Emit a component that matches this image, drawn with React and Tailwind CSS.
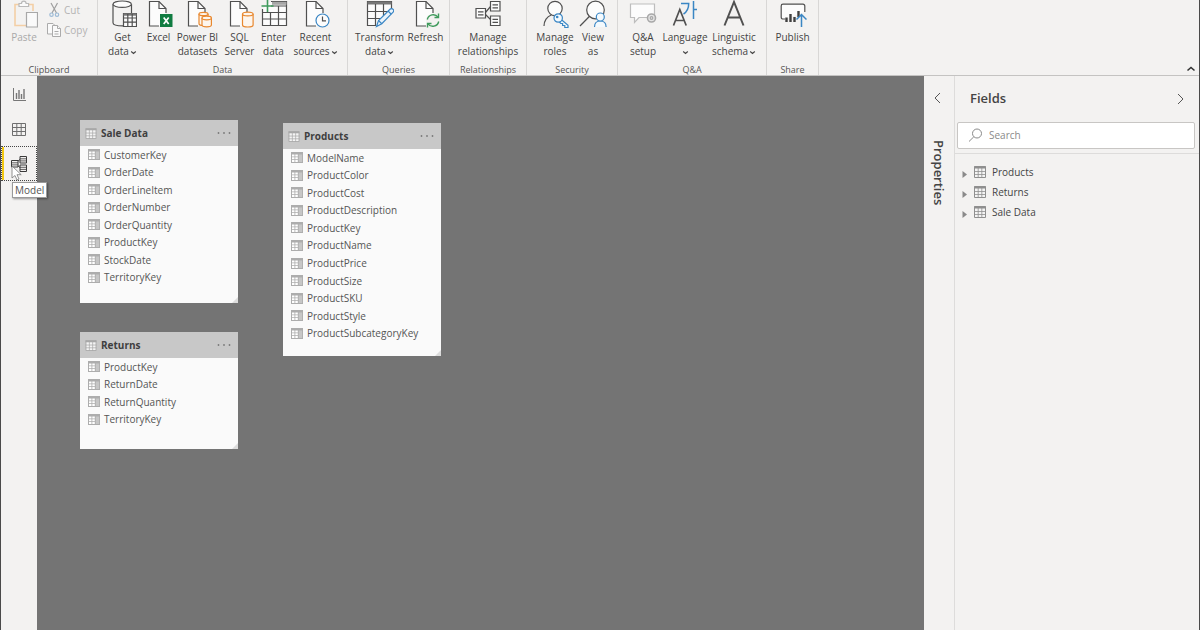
import { useState } from "react";

/* ---------- icons ---------- */

function RibbonIcon({ children }) {
  return (
    <svg
      className="h-7 w-7 shrink-0"
      viewBox="0 0 28 28"
      fill="none"
      stroke="#505050"
      strokeWidth="1.2"
      aria-hidden="true"
    >
      {children}
    </svg>
  );
}

// Sheet of paper with a folded corner, shared by several commands.
function Page() {
  return (
    <>
      <path d="M4.5 26V1.5H14l7 7V26z" fill="#fcfcfc" stroke="none" />
      <path d="M14 26H4.5V1.5H14l7 7V13" />
      <path d="M14 1.5v7h7" />
    </>
  );
}

const PasteIcon = () => (
  <RibbonIcon>
    <path d="M9 4.5H5v21h11M19 4.500h4V11" stroke="#f3cfa6" strokeWidth="1.600" />
    <path d="M9 6.500v-3h2.500a2.300 2.300 0 014.600 0h2.500v3z" fill="#fafafa" stroke="#b9b9b9" />
    <path d="M16.500 12.500H27.500V27H16.500z" fill="#fafafa" stroke="#a8a8a8" />
  </RibbonIcon>
);

const GetDataIcon = () => (
  <RibbonIcon>
    <path d="M4 4.200v18.500c0 1.800 4 3.200 10 3.200M22.500 4.200V13" />
    <ellipse cx="13.200" cy="4.200" rx="9.200" ry="3.200" fill="#fcfcfc" />
    <path d="M14.500 13.500h13v13h-13z" fill="#fcfcfc" />
    <path d="M14.500 14.500h13" stroke="#777777" strokeWidth="2.400" />
    <path d="M14.500 18h13M14.500 22.200h13M18.800 14v12.500M23.200 14v12.500" />
  </RibbonIcon>
);

const ExcelIcon = () => (
  <RibbonIcon>
    <Page />
    <path d="M15 14h12.500v13H15z" fill="#107c41" stroke="none" />
    <path d="M18.700 17.500l5 6.500M23.700 17.500l-5 6.500" stroke="#ffffff" strokeWidth="1.700" />
  </RibbonIcon>
);

const DatasetsIcon = () => (
  <RibbonIcon>
    <Page />
    <g stroke="#e8882f" fill="#fdf6ee">
      <path d="M15 14v9.500c0 1.600 2 2 4 2h5V14" />
      <ellipse cx="19.500" cy="14" rx="4.500" ry="1.700" />
      <path d="M18 18v7c0 1 2 1.800 4.700 1.800s4.700-.8 4.700-1.800v-7" />
      <ellipse cx="22.700" cy="18" rx="4.700" ry="1.800" />
    </g>
  </RibbonIcon>
);

const SqlIcon = () => (
  <RibbonIcon>
    <Page />
    <g stroke="#e8882f" fill="#fdf6ee">
      <path d="M16.500 14v11c0 1.200 2.200 2 5.300 2s5.300-.8 5.300-2V14" />
      <ellipse cx="21.800" cy="14" rx="5.300" ry="1.900" />
    </g>
  </RibbonIcon>
);

const EnterDataIcon = () => (
  <RibbonIcon>
    <path d="M2.500 9v16.500h24v-24H11" fill="#fcfcfc" />
    <path d="M12 3.300h14.500" stroke="#a6a6a6" strokeWidth="3" />
    <path d="M11 6h15.500M2.500 12.500h24M2.500 19h24M10.500 12v13.500M18.500 6v19.500" />
    <path d="M7.500 0v12M1.500 6h12" stroke="#3f9a5c" strokeWidth="1.600" />
  </RibbonIcon>
);

const RecentIcon = () => (
  <RibbonIcon>
    <Page />
    <circle cx="20.500" cy="20.500" r="6.500" fill="#fcfcfc" stroke="#3a86c4" />
    <path d="M20.500 16.500v4.300H24" />
  </RibbonIcon>
);

const TransformIcon = () => (
  <RibbonIcon>
    <path d="M1.500 1.500h24v8L14 25.500H1.500z" fill="#fcfcfc" stroke="none" />
    <path d="M10 25.500H1.500v-24h24V9" />
    <path d="M1.500 3h24" stroke="#777777" strokeWidth="3" />
    <path d="M1.500 11.500h21M1.500 18.500h14M9.500 4v21M17.500 4v12" />
    <path d="M10.500 26.500l2-6L24 9.200c1-1 2.300-.8 3.100.1s.9 2 0 2.900L15.800 23.700z" fill="#eaf4fc" stroke="#3a86c4" />
    <path d="M12.500 20.500l3.300 3.200M22 11l3.300 3.200" stroke="#3a86c4" />
  </RibbonIcon>
);

const RefreshIcon = () => (
  <RibbonIcon>
    <Page />
    <circle cx="21" cy="20.500" r="7" fill="#f3f2f1" stroke="none" />
    <g stroke="#3f9a5c" strokeWidth="1.400">
      <path d="M15.300 19.500a6 6 0 0110.700-2.300M26.700 21.500a6 6 0 01-10.700 2.300" />
      <path d="M26.500 13.500v4h-4M15.500 27.500v-4h4" />
    </g>
  </RibbonIcon>
);

const RelationshipsIcon = () => (
  <RibbonIcon>
    <path d="M11 13l6-7M11 14l6 6" />
    <path d="M2 8.500h9.500v9.500H2zM16.500 1.500H26V11h-9.500zM16.500 16H26v9.500h-9.500z" fill="#fcfcfc" />
    <path d="M4 11.800h5.500M4 14.800h5.500M18.500 4.800H24M18.500 7.800H24M18.500 19.300H24M18.500 22.300H24" />
  </RibbonIcon>
);

const RolesIcon = () => (
  <RibbonIcon>
    <circle cx="14" cy="8.500" r="7.200" fill="#fcfcfc" />
    <path d="M3 26c0-5 3-9.500 7.300-11" />
    <g stroke="#3a86c4" fill="#f3f9fd">
      <path d="M20.500 19.800l6.500 5.500v2.200h-3.200v-2h-2.200v-2h-1.800l-1.500-1.500" />
      <circle cx="17.200" cy="18" r="4.200" />
      <circle cx="16.200" cy="17" r=".7" />
    </g>
  </RibbonIcon>
);

const ViewAsIcon = () => (
  <RibbonIcon>
    <circle cx="16.500" cy="10" r="8.800" fill="#fcfcfc" />
    <path d="M10.300 16.500L1 26" />
    <g stroke="#3a86c4" fill="#f3f9fd">
      <path d="M15.500 27c0-4 2.500-6 5.800-6s5.800 2 5.800 6" />
      <circle cx="21.300" cy="17" r="4" />
    </g>
  </RibbonIcon>
);

const QaSetupIcon = () => (
  <RibbonIcon>
    <path d="M1.500 4H25.500v13.500H10l-4.500 5v-5h-4z" fill="#fcfcfc" stroke="#bdbdbd" />
    <circle cx="22.500" cy="18" r="4" fill="#e4e4e4" stroke="#a8a8a8" strokeWidth="1.600" />
    <circle cx="22.500" cy="18" r="1.300" stroke="#a8a8a8" />
  </RibbonIcon>
);

const LanguageIcon = () => (
  <RibbonIcon>
    <path d="M2.500 25.500L8.800 9.500l6.400 16M4.800 20.500h8.200" strokeWidth="1.700" />
    <path d="M10 3.500h7.700c0 5-2 8.500-5.200 10.500M22.500 1v18M22.500 9.500H26" stroke="#3a86c4" strokeWidth="1.500" />
  </RibbonIcon>
);

const LinguisticIcon = () => (
  <RibbonIcon>
    <path d="M4.500 25.500L14 2l9.500 23.500M8 17.500h12" strokeWidth="2" />
  </RibbonIcon>
);

const PublishIcon = () => (
  <RibbonIcon>
    <path d="M6 19H4A1.800 1.800 0 012.200 17.200V6A1.800 1.800 0 014 4.200h20A1.800 1.800 0 0125.800 6v6" fill="#fcfcfc" />
    <path d="M7.500 22v-4.500M11.500 22v-8M15.500 22v-5M19.500 17v-6" stroke="#404040" strokeWidth="2.400" />
    <path d="M22.500 27V14.500M17.500 19.500l5-5 5 5" stroke="#3a86c4" strokeWidth="1.500" />
  </RibbonIcon>
);

function CutIcon() {
  return (
    <svg className="h-4 w-4" viewBox="0 0 16 16" fill="none" strokeWidth="1.200" aria-hidden="true">
      <path d="M4 1l5.500 10M10.500 1L5 11" stroke="#9f9f9f" />
      <circle cx="4.500" cy="12.700" r="1.700" stroke="#9dbbd6" />
      <circle cx="10" cy="12.700" r="1.700" stroke="#9dbbd6" />
    </svg>
  );
}

function CopyIcon() {
  return (
    <svg className="h-4 w-4" viewBox="0 0 16 16" fill="#fafafa" stroke="#ababab" aria-hidden="true">
      <path d="M.5 1.500H6L8.500 4v8h-8z" />
      <path d="M5.500 3.500h5l3 3v8h-8z" />
      <path d="M10.500 3.500v3h3M7.500 9.500h4M7.500 12h4" />
    </svg>
  );
}

function TableIcon({ className, stroke = "#8f8f8f" }) {
  return (
    <svg className={className} viewBox="0 0 12 12" fill="none" stroke={stroke} aria-hidden="true">
      <path d="M.5.5h11v11H.5z" fill="#f4f4f4" />
      <path d="M0 1.500h12" strokeWidth="2" />
      <path d="M0 5.500h12M0 8.500h12M4.200 2v10M7.800 2v10" strokeWidth=".8" />
    </svg>
  );
}

function ColumnIcon() {
  return (
    <svg className="h-[11px] w-3 shrink-0" viewBox="0 0 12 11" aria-hidden="true">
      <path d="M0 0h12v11H0z" fill="#adadad" />
      <path
        d="M1 2.500h2.500v2H1zM4.300 2.500h2.500v2H4.300zM1 5.300h2.500v2H1zM4.300 5.300h2.500v2H4.300zM1 8h2.500v2H1zM4.300 8h2.500v2H4.300z"
        fill="#ffffff"
      />
      <path d="M7.700 2.500h3.400V10H7.700z" fill="#c6c6c6" />
    </svg>
  );
}

function Chevron({ d, className }) {
  return (
    <svg className={className} viewBox="0 0 12 12" fill="none" stroke="currentColor" aria-hidden="true">
      <path d={d} />
    </svg>
  );
}

const CaretDown = () => (
  <svg className="ml-px inline h-[7px] w-[7px]" viewBox="0 0 7 7" fill="none" stroke="#444444" strokeWidth="1.100" aria-hidden="true">
    <path d="M1.200 2.500l2.300 2L5.800 2.500" />
  </svg>
);

/* ---------- ribbon ---------- */

const GROUPS = [
  {
    name: "Data",
    width: "w-[250px]",
    commands: [
      { lines: ["Get", "data"], menu: true, icon: GetDataIcon, width: "w-[40px]" },
      { lines: ["Excel"], icon: ExcelIcon, width: "w-[32px]" },
      { lines: ["Power BI", "datasets"], icon: DatasetsIcon, width: "w-[46px]" },
      { lines: ["SQL", "Server"], icon: SqlIcon, width: "w-[38px]" },
      { lines: ["Enter", "data"], icon: EnterDataIcon, width: "w-[30px]" },
      { lines: ["Recent", "sources"], menu: true, icon: RecentIcon, width: "w-[54px]" },
    ],
  },
  {
    name: "Queries",
    width: "w-[102px]",
    commands: [
      { lines: ["Transform", "data"], menu: true, icon: TransformIcon, width: "w-[54px]" },
      { lines: ["Refresh"], icon: RefreshIcon, width: "w-[38px]" },
    ],
  },
  {
    name: "Relationships",
    width: "w-[77px]",
    commands: [{ lines: ["Manage", "relationships"], icon: RelationshipsIcon, width: "w-[60px]" }],
  },
  {
    name: "Security",
    width: "w-[91px]",
    commands: [
      { lines: ["Manage", "roles"], icon: RolesIcon, width: "w-[42px]" },
      { lines: ["View", "as"], icon: ViewAsIcon, width: "w-[34px]" },
    ],
  },
  {
    name: "Q&A",
    width: "w-[149px]",
    commands: [
      { lines: ["Q&A", "setup"], icon: QaSetupIcon, width: "w-[34px]" },
      { lines: ["Language", ""], menu: true, icon: LanguageIcon, width: "w-[50px]" },
      { lines: ["Linguistic", "schema"], menu: true, icon: LinguisticIcon, width: "w-[48px]" },
    ],
  },
  {
    name: "Share",
    width: "w-[52px]",
    commands: [{ lines: ["Publish"], icon: PublishIcon, width: "w-[44px]" }],
  },
];

function Command({ lines, menu, icon: Icon, width }) {
  return (
    <button type="button" className={`flex flex-col items-center hover:bg-[#e6e5e4] ${width}`}>
      <Icon />
      <span className="mt-0.5 text-[10px] leading-[14px] whitespace-nowrap">
        {lines.map((line, i) => (
          <span key={i} className="block">
            {line}
            {menu && i === lines.length - 1 && <CaretDown />}
          </span>
        ))}
      </span>
    </button>
  );
}

function RibbonGroup({ name, width, children }) {
  return (
    <section className={`shrink-0 border-r border-[#d8d7d6] ${width}`} aria-label={name}>
      <div className="flex h-[65px] items-start justify-center">{children}</div>
      <div className="text-center text-[9px] leading-[10px] text-[#555555]">{name}</div>
    </section>
  );
}

function Ribbon() {
  return (
    <header className="flex shrink-0 items-stretch border-b border-[#c4c3c2] text-[#444444]">
      <RibbonGroup name="Clipboard" width="w-[97px]">
        <button type="button" disabled className="flex w-[46px] flex-col items-center text-[#a9a9a9]">
          <PasteIcon />
          <span className="mt-0.5 text-[10px] leading-[14px]">Paste</span>
        </button>
        <div className="flex flex-1 flex-col text-[10px] leading-[14px] text-[#b3b3b3]">
          <button type="button" disabled className="flex h-5 items-center gap-px">
            <CutIcon />
            Cut
          </button>
          <button type="button" disabled className="flex h-5 items-center gap-px">
            <CopyIcon />
            Copy
          </button>
        </div>
      </RibbonGroup>
      {GROUPS.map((group) => (
        <RibbonGroup key={group.name} name={group.name} width={group.width}>
          {group.commands.map((command) => (
            <Command key={command.lines.join(" ")} {...command} />
          ))}
        </RibbonGroup>
      ))}
      <button type="button" aria-label="Collapse ribbon" className="mt-auto mr-0.5 ml-auto">
        <svg className="h-3 w-3" viewBox="0 0 12 12" fill="none" stroke="#333333" strokeWidth="1.600" aria-hidden="true">
          <path d="M2.500 7.500L6 4.500l3.500 3" />
        </svg>
      </button>
    </header>
  );
}

/* ---------- view rail ---------- */

const VIEWS = [
  {
    name: "Report",
    icon: (
      <>
        <path d="M2.500 2v12.500H15" stroke="#777777" />
        <path d="M5.500 13V7M8 13V4M10.500 13V8M13 13V3" stroke="#777777" strokeWidth="1.400" />
      </>
    ),
  },
  {
    name: "Data",
    icon: (
      <g stroke="#6f6f6f">
        <path d="M1.500 2.500h13v12h-13z" />
        <path d="M1.500 6.500h13M1.500 10.500h13M5.800 2.500v12M10.200 2.500v12" />
      </g>
    ),
  },
  {
    name: "Model",
    icon: (
      <g stroke="#3a3a3a">
        <path d="M6 6l3.500-3M6 9l3.500 3" />
        <path d="M9 .5h6.500v6.500H9zM9 9h6.500v6.500H9zM.5 4.500H7V11H.5z" fill="#f3f2f1" />
        <path d="M9 2.800h6.500M9 4.900h6.500M9 11.300h6.500M9 13.400h6.500M.5 6.800H7M.5 8.900H7" strokeWidth=".8" />
      </g>
    ),
  },
];

function Pointer() {
  return (
    <svg className="pointer-events-none absolute top-[19px] left-2.5 h-4 w-3" viewBox="0 0 12 16" aria-hidden="true">
      <path d="M1 1v12l3-2.500 2 4.500 2-1-2-4.300h4.200z" fill="#ffffff" stroke="#777777" strokeWidth=".8" />
    </svg>
  );
}

function ViewRail({ view, onChange }) {
  return (
    <nav className="flex w-9 shrink-0 flex-col" aria-label="Views">
      {VIEWS.map(({ name, icon }) => (
        <div key={name} className="relative">
          <button
            type="button"
            aria-label={name}
            aria-pressed={view === name}
            onClick={() => onChange(name)}
            className={`flex h-[35px] w-full items-center justify-center ${
              view === name
                ? "border border-dotted border-[#444444] shadow-[inset_2px_0_0_#f2c811]"
                : ""
            }`}
          >
            <svg className="h-4 w-4" viewBox="0 0 16 16" fill="none" aria-hidden="true">
              {icon}
            </svg>
          </button>
          {view === name && (
            <>
              <Pointer />
              <span
                role="tooltip"
                className="absolute top-9 left-[11px] z-10 border border-[#9a9a9a] bg-white px-0.5 text-[10px] leading-[14px] text-[#555555] shadow-[1px_1px_2px_rgba(0,0,0,0.4)]"
              >
                {name}
              </span>
            </>
          )}
        </div>
      ))}
    </nav>
  );
}

/* ---------- model canvas ---------- */

const TABLES = [
  {
    name: "Sale Data",
    place: "left-[43px] top-[44px] h-[183px]",
    list: "h-[140px]",
    columns: [
      "CustomerKey",
      "OrderDate",
      "OrderLineItem",
      "OrderNumber",
      "OrderQuantity",
      "ProductKey",
      "StockDate",
      "TerritoryKey",
    ],
  },
  {
    name: "Returns",
    place: "left-[43px] top-[256px] h-[117px]",
    list: "h-[70px]",
    columns: ["ProductKey", "ReturnDate", "ReturnQuantity", "TerritoryKey"],
  },
  {
    name: "Products",
    place: "left-[246px] top-[47px] h-[233px]",
    list: "h-[193px]",
    columns: [
      "ModelName",
      "ProductColor",
      "ProductCost",
      "ProductDescription",
      "ProductKey",
      "ProductName",
      "ProductPrice",
      "ProductSize",
      "ProductSKU",
      "ProductStyle",
      "ProductSubcategoryKey",
    ],
  },
];

function TableCard({ name, place, list, columns }) {
  return (
    <article className={`absolute w-[158px] bg-[#fafafa] text-[#555555] ${place}`}>
      <header className="flex h-[26px] items-center bg-[#c8c8c8] pr-[7px] pl-[5px]">
        <TableIcon className="h-[11px] w-3" stroke="#a8a8a8" />
        <h3 className="ml-1 flex-1 text-[10px] font-bold text-[#3f3f3f]">{name}</h3>
        <button type="button" aria-label={`${name} options`}>
          <svg className="h-1 w-[14px]" viewBox="0 0 14 4" fill="#7a7a7a" aria-hidden="true">
            <circle cx="1.500" cy="2" r=".9" />
            <circle cx="7" cy="2" r=".9" />
            <circle cx="12.500" cy="2" r=".9" />
          </svg>
        </button>
      </header>
      <ul className={`grid auto-rows-fr ${list}`}>
        {columns.map((column) => (
          <li key={column} className="flex items-center gap-1 pl-2 text-[10px] leading-[14px]">
            <ColumnIcon />
            {column}
          </li>
        ))}
      </ul>
      {/* resize grip */}
      <svg className="absolute right-0 bottom-0 h-1.5 w-1.5" viewBox="0 0 6 6" aria-hidden="true">
        <path d="M6 0v6H0z" fill="#dcdcdc" />
      </svg>
    </article>
  );
}

/* ---------- side panes ---------- */

function PropertiesPane() {
  return (
    <aside className="flex w-[30px] shrink-0 flex-col items-center pt-4">
      <button type="button" aria-label="Expand properties" className="text-[#555555]">
        <Chevron d="M7 1L2 6l5 5" className="h-3 w-3" />
      </button>
      <h2 className="mt-9 text-[13px] leading-4 font-semibold text-[#444444] [writing-mode:vertical-rl]">
        Properties
      </h2>
    </aside>
  );
}

function FieldsPane() {
  const [query, setQuery] = useState("");
  const names = ["Products", "Returns", "Sale Data"].filter((name) =>
    name.toLowerCase().includes(query.toLowerCase())
  );

  return (
    <aside className="w-[245px] shrink-0 border-l border-[#dddcdb]">
      <div className="flex h-[46px] items-center justify-between pr-[13px] pl-[15px]">
        <h2 className="text-[13px] font-semibold text-[#444444]">Fields</h2>
        <button type="button" aria-label="Collapse fields" className="text-[#555555]">
          <Chevron d="M4 1l5 5-5 5" className="h-3 w-3" />
        </button>
      </div>
      <div className="border-b border-[#dddcdb] pr-1 pb-1 pl-0.5">
        <label className="flex h-[27px] items-center gap-1.5 rounded-[2px] border border-[#c8c6c4] bg-white px-2.5">
          <svg className="h-[15px] w-[15px] shrink-0" viewBox="0 0 15 15" fill="none" stroke="#8a8a8a" aria-hidden="true">
            <circle cx="9" cy="5.500" r="4.500" />
            <path d="M5.800 8.800L1 13.500" />
          </svg>
          <input
            type="search"
            aria-label="Search fields"
            placeholder="Search"
            value={query}
            onChange={(e) => setQuery(e.target.value)}
            className="min-w-0 flex-1 bg-transparent text-[10px] text-[#444444] outline-none placeholder:text-[#8a8a8a]"
          />
        </label>
      </div>
      <ul className="pt-2 text-[10px] text-[#444444]">
        {names.map((name) => (
          <li key={name}>
            <button type="button" className="flex h-5 w-full items-center pl-[7px]">
              <svg className="mt-1 h-[7px] w-[5px]" viewBox="0 0 5 7" fill="#8a8a8a" aria-hidden="true">
                <path d="M.5 0L5 3.500.5 7z" />
              </svg>
              <TableIcon className="mr-1.5 ml-[7px] h-3 w-3" />
              {name}
            </button>
          </li>
        ))}
      </ul>
    </aside>
  );
}

export default function App() {
  const [view, setView] = useState("Model");

  return (
    <div className="flex h-screen flex-col overflow-hidden border-x border-[#4a4a4a] bg-[#f3f2f1] font-['Open_Sans','Noto_Sans',sans-serif]">
      <Ribbon />
      <div className="flex min-h-0 flex-1">
        <ViewRail view={view} onChange={setView} />
        <main className="relative min-w-0 flex-1 overflow-hidden bg-[#747474]">
          {TABLES.map((table) => (
            <TableCard key={table.name} {...table} />
          ))}
        </main>
        <PropertiesPane />
        <FieldsPane />
      </div>
    </div>
  );
}
